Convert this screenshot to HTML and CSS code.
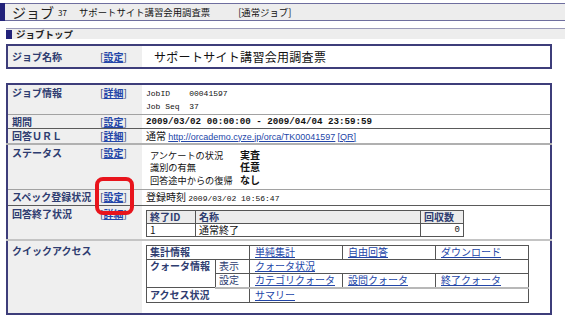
FILE: index.html
```html
<!DOCTYPE html>
<html lang="ja">
<head>
    <meta charset="UTF-8">
    <title>ジョブトップ</title>
    <link rel="stylesheet" href="styles.css">
</head>
<body>

<div class="jobbar">
    <span class="mark"></span>
    <span class="job-title">ジョブ</span>
    <span class="job-no">37</span>
    <span class="job-name">サポートサイト講習会用調査票</span>
    <span class="job-type">[通常ジョブ]</span>
</div>

<div class="subbar">
    <span class="mark"></span>
    <h2>ジョブトップ</h2>
</div>

<table class="jobname">
    <tr>
        <th><span class="lbl">ジョブ名称</span><span class="act">[<a href="#">設定</a>]</span></th>
        <td>サポートサイト講習会用調査票</td>
    </tr>
</table>

<table class="main">
    <tr class="r-info">
        <th><span class="lbl">ジョブ情報</span><span class="act">[<a href="#">詳細</a>]</span></th>
        <td class="mono">JobID    00041597<br>Job Seq  37</td>
    </tr>
    <tr class="r-period">
        <th><span class="lbl">期間</span><span class="act">[<a href="#">設定</a>]</span></th>
        <td class="mono bold">2009/03/02 00:00:00 - 2009/04/04 23:59:59</td>
    </tr>
    <tr class="r-url">
        <th><span class="lbl">回答ＵＲＬ</span><span class="act">[<a href="#">詳細</a>]</span></th>
        <td>通常 <a class="url" href="#">http://orcademo.cyze.jp/orca/TK00041597</a> <a class="url" href="#">[QR]</a></td>
    </tr>
    <tr class="r-status">
        <th><span class="lbl">ステータス</span><span class="act">[<a href="#">設定</a>]</span></th>
        <td>
            <table class="status">
                <tr><td>アンケートの状況</td><td class="val">実査</td></tr>
                <tr><td>識別の有無</td><td class="val">任意</td></tr>
                <tr><td>回答途中からの復帰</td><td class="val">なし</td></tr>
            </table>
        </td>
    </tr>
    <tr class="r-spec">
        <th><span class="lbl">スペック登録状況</span><span class="act">[<a href="#">設定</a>]</span></th>
        <td>登録時刻 <span class="mono">2009/03/02 10:56:47</span></td>
    </tr>
    <tr class="r-end">
        <th><span class="lbl">回答終了状況</span><span class="act">[<a href="#">詳細</a>]</span></th>
        <td>
            <table class="grid endgrid">
                <tr class="head"><th class="c-id">終了ID</th><th class="c-name">名称</th><th class="c-num">回収数</th></tr>
                <tr><td>1</td><td>通常終了</td><td class="num">0</td></tr>
            </table>
        </td>
    </tr>
    <tr class="r-quick">
        <th><span class="lbl">クイックアクセス</span></th>
        <td>
            <table class="grid quick">
                <tr>
                    <th colspan="2">集計情報</th>
                    <td class="c-l1"><a href="#">単純集計</a></td>
                    <td class="c-l2"><a href="#">自由回答</a></td>
                    <td class="c-l3"><a href="#">ダウンロード</a></td>
                </tr>
                <tr>
                    <th class="c-lab" rowspan="2">クォータ情報</th>
                    <th class="sub c-sub">表示</th>
                    <td colspan="3"><a href="#">クォータ状況</a></td>
                </tr>
                <tr class="soft">
                    <th class="sub">設定</th>
                    <td><a href="#">カテゴリクォータ</a></td>
                    <td><a href="#">設問クォータ</a></td>
                    <td><a href="#">終了クォータ</a></td>
                </tr>
                <tr>
                    <th colspan="2">アクセス状況</th>
                    <td colspan="3"><a href="#">サマリー</a></td>
                </tr>
            </table>
        </td>
    </tr>
</table>

<!-- annotation drawn over the page -->
<div class="callout"></div>

</body>
</html>
```

FILE: styles.css
```css
body {
    margin: 0;
    font-family: "Noto Sans CJK JP", sans-serif;
    font-size: 10px;
    color: #111;
    background: #fff;
}

a {
    color: #2346a8;
}

/* top job bar */
.jobbar {
    margin-top: 3px;
    height: 16px;
    display: flex;
    align-items: center;
    background: #ededed;
    border-top: 1px solid #6e6e9e;
    border-bottom: 1px solid #6e6e9e;
}
.jobbar .mark {
    width: 5px;
    align-self: stretch;
    margin: -1px 7px -1px 0;
    background: #22227a;
}
.job-title {
    font-size: 14px;
    line-height: 16px;
    color: #222;
}
.job-no {
    margin-left: 4px;
    font-size: 8px;
}
.job-name {
    margin-left: 12px;
    font-size: 9.4px;
}
.job-type {
    margin-left: 28px;
    font-size: 9.4px;
}

.subbar {
    margin: 7px 0 0 6px;
    height: 10px;
    display: flex;
    align-items: center;
    background: #ededed;
    border-top: 1px solid #9a9ab8;
}
.subbar .mark {
    width: 6px;
    height: 9px;
    margin-right: 4px;
    background: #22227a;
}
.subbar h2 {
    margin: 0;
    font-size: 9.5px;
    line-height: 10px;
    color: #222;
}

/* label column */
.lbl {
    display: inline-block;
    width: 88px;
    font-weight: bold;
    color: #2e3c70;
}
.act {
    color: #2e3c70;
}
.act a {
    font-weight: bold;
}

.jobname,
.main {
    margin-left: 6px;
    width: 546px;
    border: 2px solid #3d3d7a;
    border-collapse: collapse;
}
.jobname {
    margin-top: 5px;
    height: 25px;
}
.jobname > tbody > tr > th,
.main > tbody > tr > th {
    box-sizing: border-box;
    width: 135px;
    padding: 0 0 0 4px;
    background: #efefef;
    text-align: left;
    font-weight: normal;
    line-height: 13px;
}
.jobname > tbody > tr > td {
    padding: 0 0 0 12px;
    font-size: 12px;
    letter-spacing: .3px;
}

.main {
    margin-top: 14px;
}
.main > tbody > tr > th,
.main > tbody > tr > td {
    vertical-align: top;
    border-top: 1px solid #a2a2a2;
    line-height: 13px;
}
.main > tbody > tr > th {
    padding-top: 1px;
}
.main > tbody > tr > td {
    padding: 1px 0 0 4px;
}

.mono {
    font-family: "Liberation Mono", monospace;
    font-size: 8px;
    white-space: pre;
}
.mono.bold {
    font-size: 9.2px;
    font-weight: bold;
}
.url {
    font-family: "Liberation Sans", sans-serif;
    font-size: 9px;
}

.r-info { height: 30px; }
.r-info > td { padding-top: 2px !important; }
.r-period { height: 14px; }
.r-url { height: 15px; }
.r-status { height: 46px; }
.r-spec { height: 16px; }
.r-end { height: 34px; }
.r-quick { height: 74px; }
.r-period > th, .r-period > td,
.r-url > th, .r-url > td,
.r-spec > th, .r-spec > td {
    line-height: 12px !important;
}
.r-url > th, .r-url > td,
.r-end > th, .r-end > td {
    border-top-color: #5a5a5a !important;
}
.r-status > th, .r-status > td {
    border-top: 2px solid #b0b0b0 !important;
}
.r-quick > th, .r-quick > td {
    border-top: 2px solid #c4c4c4 !important;
}
.r-quick > th {
    padding-top: 3px !important;
}

/* status list */
.status {
    margin: 3px 0 0 4px;
    border-collapse: collapse;
}
.status td {
    padding: 0;
    font-size: 9.2px;
    line-height: 12.5px;
    white-space: nowrap;
}
.status td:first-child {
    width: 90px;
}
.status .val {
    font-weight: bold;
    font-size: 10px;
}

/* small grids */
.grid {
    border-collapse: collapse;
    border: 1px solid #333;
}
.grid th,
.grid td {
    border: 1px solid #555;
    padding: 0 3px;
    line-height: 12px;
    text-align: left;
    white-space: nowrap;
}
.grid th {
    color: #2e3c70;
}
.endgrid {
    margin-top: 3px;
    width: 318px;
}
.endgrid .head th {
    background: #ececec;
}
.endgrid .c-id { width: 42px; }
.endgrid .c-name { width: 218px; }
.endgrid .num {
    text-align: right;
    font-family: "Liberation Mono", monospace;
    font-size: 9px;
}

.quick {
    margin-top: 3px;
    width: 383px;
}
.quick th,
.quick td {
    height: 13px;
    padding-top: 0;
    padding-bottom: 0;
}
.quick td {
    padding-left: 5px;
}
.quick .c-lab { width: 62px; vertical-align: top; }
.quick .c-sub { width: 27px; }
.quick .sub {
    font-weight: normal;
}
.quick .c-l1 { width: 84px; }
.quick .c-l2 { width: 84px; }
.quick .soft td,
.quick .soft th.sub {
    border-bottom: 2px solid #b8b8b8;
}

/* red annotation around the spec link */
.callout {
    position: absolute;
    left: 95px;
    top: 177px;
    width: 39px;
    height: 38px;
    box-sizing: border-box;
    border: 4px solid #e8141c;
    border-radius: 8px;
}
```
